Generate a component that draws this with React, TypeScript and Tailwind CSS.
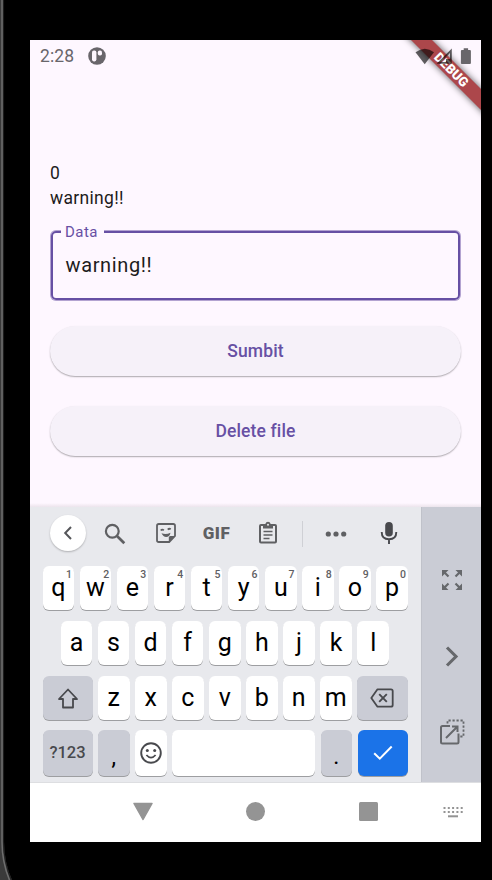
import type { ReactNode } from "react";

const ROW_ONE = ["q", "w", "e", "r", "t", "y", "u", "i", "o", "p"];
const ROW_TWO = ["a", "s", "d", "f", "g", "h", "j", "k", "l"];
const ROW_THREE = ["z", "x", "c", "v", "b", "n", "m"];

const keyBase =
  "relative flex shrink-0 items-center justify-center rounded-[6px] shadow-[0_1px_0.5px_rgba(0,0,0,0.32)]";

function LetterKey({ label, hint }: { label: string; hint?: string }) {
  return (
    <div className={`${keyBase} h-[44px] w-[31.5px] bg-white text-[25px] leading-none text-black`}>
      <span className="-mt-[1px]">{label}</span>
      {hint && (
        <span className="absolute right-[2px] top-[3px] text-[10.5px] leading-[11px] font-medium text-[#5f6063]">
          {hint}
        </span>
      )}
    </div>
  );
}

function GreyKey({ className, children }: { className: string; children: ReactNode }) {
  return <div className={`${keyBase} bg-[#caccd5] ${className}`}>{children}</div>;
}

function StatusBar() {
  return (
    <div className="relative z-20 flex h-[32px] items-center pl-[10px] pt-px text-[#69666b]">
      <span className="w-[35px] pt-px text-[17.5px] leading-none tracking-[0.1px]">2:28</span>
      <svg className="ml-[13px] -mt-[2px]" width="18" height="18" viewBox="0 0 18 18">
        <circle cx="9" cy="9" r="8.8" fill="#69666b" />
        <rect x="4" y="3.6" width="4.4" height="10.8" rx="1.8" fill="#fef7ff" />
        <rect x="9.800" y="3.600" width="4.200" height="5" rx="1.800" fill="#fef7ff" />
      </svg>
      <svg className="ml-auto" width="66" height="20" viewBox="0 0 66 20">
        <path d="M0.5 5.2 Q10 -1.8 19 5.2 L9.7 17.2Z" fill="#000" fillOpacity=".62" />
        <path
          d="M36.8 1.6V16.8H21.5ZM35 6L26 15H31V12H35Z"
          fill="#000"
          fillOpacity=".62"
          fillRule="evenodd"
        />
        <path
          d="M48.7 1.2h4.4v1.7h1.8q1 0 1 1v12.1q0 1-1 1h-8q-1 0-1-1V3.9q0-1 1-1h1.8z"
          fill="#69666b"
        />
      </svg>
    </div>
  );
}

function DebugBanner() {
  return (
    <svg className="absolute right-0 top-0 z-10" width="90" height="90" viewBox="0 0 90 90">
      <defs>
        <filter id="bannerShadow" x="-30%" y="-30%" width="160%" height="160%">
          <feGaussianBlur stdDeviation="3.6" />
        </filter>
      </defs>
      <path d="M30 -11L101 60V81L9 -11Z" fill="#000" fillOpacity=".65" filter="url(#bannerShadow)" />
      <path d="M30 -11L101 60V81L9 -11Z" fill="#ac474b" />
      <text
        x="0"
        y="4.5"
        transform="translate(60.3 29.7) rotate(45)"
        textAnchor="middle"
        className="fill-white text-[13.2px] font-black"
      >
        DEBUG
      </text>
    </svg>
  );
}

function PillButton({ children }: { children: ReactNode }) {
  return (
    <button className="flex h-[50px] w-full items-center justify-center rounded-full bg-[#f6f1f9] pt-[2px] text-[17.5px] font-medium leading-none tracking-[0.12px] text-[#6750a4] shadow-[0_1px_1.5px_rgba(0,0,0,0.32)]">
      {children}
    </button>
  );
}

function AppScreen() {
  return (
    <div className="relative h-[467px] overflow-hidden bg-[#fef7ff]">
      <StatusBar />
      <DebugBanner />
      <div className="flex flex-col px-[20px] pt-[88px] text-[#1d1b20]">
        <p className="h-[25px] text-[17.5px] leading-[27px] tracking-[0.31px]">0</p>
        <p className="h-[25px] text-[17.5px] leading-[27px] tracking-[0.31px]">warning!!</p>
        <div className="relative mx-[1px] mt-[21px] flex h-[69px] items-center rounded-[5px] border-2 border-[#6750a4] pb-[2px] pl-[12.5px] shadow-[0_0_0_1px_rgba(103,80,164,0.5)]">
          <label className="absolute -top-[9px] left-[8px] h-[17px] bg-[#fef7ff] pl-[4px] pr-[6px] text-[15px] leading-[17px] tracking-[0.47px] text-[#6750a4]">
            Data
          </label>
          <span className="text-[20px] leading-none tracking-[0.63px]">warning!!</span>
        </div>
        <div className="mt-[26px] flex flex-col gap-[30px]">
          <PillButton>Sumbit</PillButton>
          <PillButton>Delete file</PillButton>
        </div>
      </div>
      <div className="absolute bottom-0 h-[4px] w-full bg-gradient-to-b from-transparent to-[#ece4ec]" />
    </div>
  );
}

function Toolbar() {
  return (
    <div className="flex h-[53px] items-center pl-[19.5px]">
      <div className="-mt-px flex h-[36px] w-[36px] shrink-0 items-center justify-center rounded-full bg-white shadow-[0_1px_2px_rgba(0,0,0,0.25)]">
        <svg width="10" height="14" viewBox="0 0 10 14" fill="none">
          <path d="M8 1L2.200 7L8 13" stroke="#55565a" strokeWidth="2" />
        </svg>
      </div>
      <svg className="ml-[18.5px] shrink-0" width="22" height="22" viewBox="0 0 22 22" fill="none" stroke="#5f6063">
        <circle cx="8.300" cy="8.300" r="6.400" strokeWidth="2.200" />
        <path d="M13 13L20.300 20.300" strokeWidth="2.700" />
      </svg>
      <svg className="ml-[29.5px] -mt-px shrink-0" width="20" height="20" viewBox="0 0 20 20" fill="none">
        <path
          d="M2.800 1H17.200Q19 1 19 2.800V13L13.200 19H2.800Q1 19 1 17.200V2.800Q1 1 2.800 1Z"
          stroke="#5f6063"
          strokeWidth="1.800"
        />
        <path d="M12.800 19V14.500Q12.800 13 14.300 13H19Z" fill="#5f6063" />
        <path d="M5.500 10.300Q10 12 14.500 9.700Q13.500 14 10.200 14Q7.200 14 5.500 10.300Z" fill="#5f6063" />
        <path d="M4.800 7.500Q6.300 5.800 7.800 7.300M11.800 6.600Q13.200 5 14.700 6.200" stroke="#5f6063" strokeWidth="1.800" />
      </svg>
      <span className="ml-[26px] w-[30px] shrink-0 text-center text-[17px] font-black leading-none tracking-[0.5px] text-[#5f6063]">
        GIF
      </span>
      <svg className="ml-[26px] -mt-px shrink-0" width="20" height="24" viewBox="0 0 20 24">
        <rect x="2" y="4" width="16" height="17.500" rx="1" fill="none" stroke="#5f6063" strokeWidth="2" />
        <path d="M5 3H7.300Q8 .8 10 .8Q12 .8 12.700 3H15V7.500H5Z" fill="#5f6063" />
        <circle cx="10" cy="3.800" r="1" fill="#e8eaed" />
        <path d="M5.500 10.500H14.500M5.500 14H14.500M5.500 17.500H11.500" stroke="#5f6063" strokeWidth="1.700" />
      </svg>
      <div className="ml-[24px] h-[26px] w-px shrink-0 bg-[#cfd0d5]" />
      <svg className="ml-[22px] shrink-0" width="22" height="6" viewBox="0 0 22 6" fill="#5f6063">
        <circle cx="3.300" cy="3" r="2.600" />
        <circle cx="11" cy="3" r="2.600" />
        <circle cx="18.700" cy="3" r="2.600" />
      </svg>
      <svg className="-mt-px ml-[33px] shrink-0" width="18" height="24" viewBox="0 0 18 24" fill="none" stroke="#48494d">
        <rect x="5.200" y="1" width="7.600" height="14.500" rx="3.800" fill="#48494d" stroke="none" />
        <path d="M1.700 11Q1.700 18.200 9 18.200Q16.300 18.200 16.300 11M9 18V23" strokeWidth="1.900" />
      </svg>
    </div>
  );
}

function Keyboard() {
  return (
    <div className="w-[391px] shrink-0 bg-[#e8e9ed]">
      <Toolbar />
      <div className="flex flex-col pl-[12.5px] pt-[6px]">
        <div className="flex gap-[5.6px]">
          {ROW_ONE.map((k, i) => (
            <LetterKey key={k} label={k} hint={String((i + 1) % 10)} />
          ))}
        </div>
        <div className="mt-[11px] flex gap-[5.6px] pl-[18.2px]">
          {ROW_TWO.map((k) => (
            <LetterKey key={k} label={k} />
          ))}
        </div>
        <div className="mt-[11px] flex gap-[5.5px]">
          <GreyKey className="h-[44px] w-[50px]">
            <svg width="22" height="21" viewBox="0 0 22 21" fill="none">
              <path
                d="M11 1.500L20 11H16V19.500H6V11H2Z"
                stroke="#48494d"
                strokeWidth="1.800"
                strokeLinejoin="round"
              />
            </svg>
          </GreyKey>
          {ROW_THREE.map((k) => (
            <LetterKey key={k} label={k} />
          ))}
          <GreyKey className="h-[44px] w-[50.5px]">
            <svg width="24" height="20" viewBox="0 0 24 20" fill="none" stroke="#48494d">
              <path
                d="M7.500 1.300H21Q22.700 1.300 22.700 3V17Q22.700 18.700 21 18.700H7.500L1.300 10Z"
                strokeWidth="1.800"
                strokeLinejoin="round"
              />
              <path d="M9.200 6.200L16.800 13.800M16.800 6.200L9.200 13.800" strokeWidth="1.900" />
            </svg>
          </GreyKey>
        </div>
        <div className="mt-[10px] flex gap-[5.5px]">
          <GreyKey className="h-[46px] w-[50px] text-[16.5px] font-medium text-[#48494d]">
            <span className="mt-px">?123</span>
          </GreyKey>
          <GreyKey className="h-[46px] w-[31.5px] text-[23px] leading-none text-black">
            <span className="mt-[9px]">,</span>
          </GreyKey>
          <div className={`${keyBase} h-[46px] w-[31.5px] bg-white`}>
            <svg width="22" height="22" viewBox="0 0 22 22" fill="none" stroke="#48494d">
              <circle cx="11" cy="11" r="9.800" strokeWidth="1.900" />
              <circle cx="7.300" cy="8.500" r="1.500" fill="#48494d" stroke="none" />
              <circle cx="14.700" cy="8.500" r="1.500" fill="#48494d" stroke="none" />
              <path d="M6.400 13Q11 18.200 15.600 13" strokeWidth="1.800" />
            </svg>
          </div>
          <div className={`${keyBase} h-[46px] w-[143px] bg-white`} />
          <GreyKey className="h-[46px] w-[31.5px] text-[23px] leading-none text-black">
            <span className="mt-[7px]">.</span>
          </GreyKey>
          <div className={`${keyBase} h-[46px] w-[50.5px] bg-[#1b73e8]`}>
            <svg width="20" height="16" viewBox="0 0 20 16" fill="none">
              <path d="M1.200 8.200L6.800 13.700L18.700 1.500" stroke="#fff" strokeWidth="2" />
            </svg>
          </div>
        </div>
      </div>
    </div>
  );
}

function SidePanel() {
  return (
    <div className="flex w-[60px] flex-col items-center bg-[#caccd5] pl-px pt-[62px] shadow-[inset_1px_0_0_#c0c2ca]">
      <svg width="22" height="22" viewBox="0 0 22 22" fill="none" stroke="#66686c">
        <path d="M1 1H7.500L1 7.500ZM21 1V7.500L14.500 1ZM1 21V14.500L7.500 21ZM21 21H14.500L21 14.500Z" fill="#66686c" stroke="none" />
        <path d="M3 3L7.500 7.500M19 3L14.500 7.500M3 19L7.500 14.500M19 19L14.500 14.500" strokeWidth="2.200" />
      </svg>
      <svg className="ml-px mt-[55px]" width="14" height="21" viewBox="0 0 14 21" fill="none">
        <path d="M2 1.500L11 10.500L2 19.500" stroke="#66686c" strokeWidth="3.100" />
      </svg>
      <svg className="mt-[52px]" width="26" height="26" viewBox="0 0 26 26" fill="none" stroke="#66686c" strokeWidth="2">
        <path d="M11 7H3.500Q2 7 2 8.500V23Q2 24.500 3.500 24.500H18Q19.500 24.500 19.500 23V14.500" />
        <path d="M7 19L18 8M13 7.500H18.500V13" />
        <path d="M8.500 4.500V1.500H24.500V17.500H21" strokeDasharray="2.200 1.800" strokeWidth="1.800" />
      </svg>
    </div>
  );
}

function NavigationBar() {
  return (
    <div className="flex h-[60px] items-center border-t border-[#dddee1] bg-white pb-[2px] pl-[102px] text-[#949494]">
      <svg className="shrink-0" width="22" height="20" viewBox="0 0 22 20">
        <path d="M2 1.500H20L11 17.500Z" fill="currentColor" stroke="currentColor" strokeWidth="1.500" strokeLinejoin="round" />
      </svg>
      <div className="ml-[92px] h-[18.5px] w-[18.5px] shrink-0 rounded-full bg-[#949494]" />
      <div className="ml-[94.5px] h-[19px] w-[19px] shrink-0 rounded-[1.5px] bg-[#949494]" />
      <svg className="ml-[65px] shrink-0" width="20" height="12" viewBox="0 0 20 12" stroke="currentColor" strokeWidth="2">
        <path d="M.5 2H20M.5 6H20" strokeDasharray="2 2.300" />
        <path d="M5 10.300H15" />
      </svg>
    </div>
  );
}

/* The visible left rim of the handset, curving inwards at the lower corner. */
function DeviceRim() {
  return (
    <svg className="shrink-0" width="16" height="880" viewBox="0 0 16 880" fill="none">
      <path d="M0 0H4V842Q4 862 12 880H0Z" fill="#3a3a3a" />
      <path d="M2 0V842Q2 862 9.500 880" stroke="#6e6e6e" strokeWidth="1.500" />
      <path d="M3.600 0V842Q3.600 862 12 882" stroke="#1c1c1c" strokeWidth="1" />
    </svg>
  );
}

export default function App() {
  return (
    <div className="flex h-[880px] w-[492px] overflow-hidden bg-black font-['Roboto',sans-serif]">
      <DeviceRim />
      <div className="ml-[14px] mt-[40px] flex h-[802px] w-[451px] shrink-0 flex-col">
        <AppScreen />
        <div className="flex h-[275px]">
          <Keyboard />
          <SidePanel />
        </div>
        <NavigationBar />
      </div>
    </div>
  );
}
